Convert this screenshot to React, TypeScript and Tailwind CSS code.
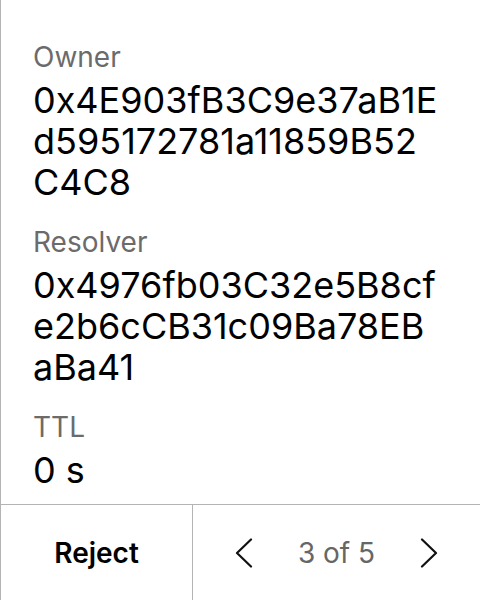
const fields = [
  { label: "Owner", lines: ["0x4E903fB3C9e37aB1E", "d595172781a11859B52", "C4C8"] },
  { label: "Resolver", lines: ["0x4976fb03C32e5B8cf", "e2b6cCB31c09Ba78EB", "aBa41"] },
  { label: "TTL", lines: ["0 s"] },
];

function Chevron({ dir }: { dir: "left" | "right" }) {
  return (
    <svg width="18" height="30" viewBox="0 0 18 30" fill="none">
      <path
        d={dir === "left" ? "M16 1.5 L2 15 L16 28.5" : "M2 1.5 L16 15 L2 28.5"}
        stroke="#111"
        strokeWidth="2.2"
        strokeLinecap="round"
        strokeLinejoin="round"
      />
    </svg>
  );
}

export default function App() {
  return (
    <div className="flex h-[600px] w-[480px] flex-col border-l border-[#b4b4b4] bg-white font-['Inter',sans-serif] text-black">
      <div className="flex flex-1 flex-col gap-[23px] px-8 pt-[41px]">
        {fields.map((field) => (
          <div key={field.label} className="flex flex-col">
            <p className="text-[28px] leading-[32px] text-[#6b6b6b]">
              {field.label}
            </p>
            <p className="mt-[7px] text-[36px] leading-[41px] whitespace-nowrap">
              {field.lines.map((line) => (
                <span key={line} className="block">
                  {line}
                </span>
              ))}
            </p>
          </div>
        ))}
      </div>

      <div className="grid h-[96px] grid-cols-[191px_1fr] border-t border-[#b4b4b4]">
        <button className="flex items-center justify-center text-[28px] font-semibold">
          Reject
        </button>
        <div className="flex items-center justify-between border-l border-[#b4b4b4] px-[42px]">
          <Chevron dir="left" />
          <span className="text-[28px] text-[#666]">3 of 5</span>
          <Chevron dir="right" />
        </div>
      </div>
    </div>
  );
}
